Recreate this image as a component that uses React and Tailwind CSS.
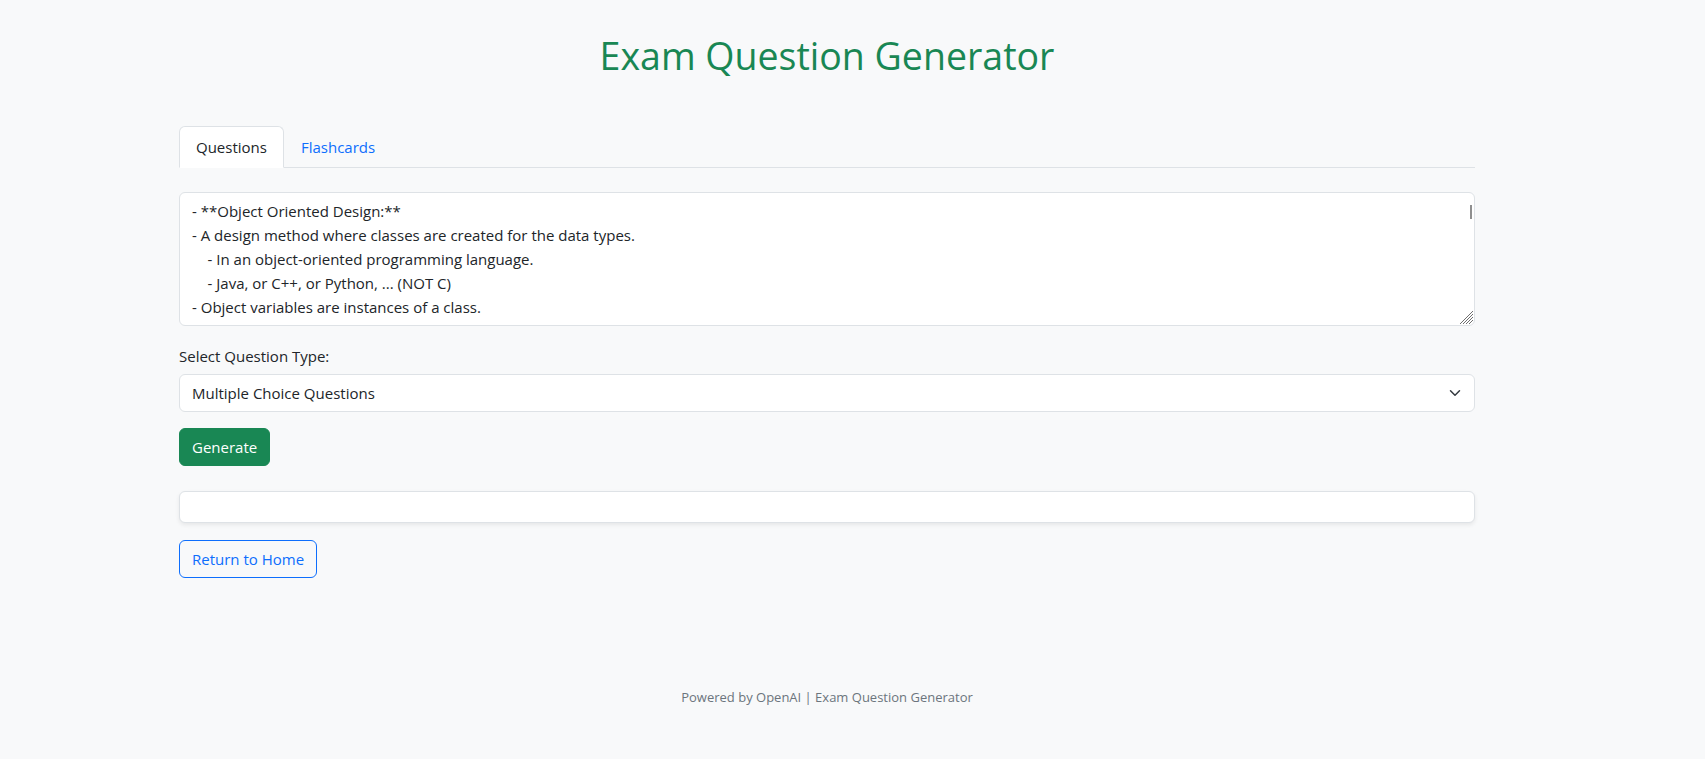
import { useState } from 'react';

const NOTES = [
  '- **Object Oriented Design:**',
  '- A design method where classes are created for the data types.',
  '    - In an object-oriented programming language.',
  '    - Java, or C++, or Python, ... (NOT C)',
  '- Object variables are instances of a class.',
].join('\n');

export default function App() {
  const [tab, setTab] = useState('questions');
  const [type, setType] = useState('mcq');

  return (
    <div className="min-h-screen bg-[#f8f9fa] font-['Open_Sans','Noto_Sans',sans-serif] text-[15px] text-[#212529]">
      <div className="w-[1654px]">
        <div className="mx-auto w-[1296px] pt-8">
          <h1 className="mb-[46px] text-center text-[37.5px] leading-[48px] text-[#198754]">
            Exam Question Generator
          </h1>

          <ul className="flex border-b border-[#dee2e6]">
            <li className="-mb-px">
              <button
                type="button"
                onClick={() => setTab('questions')}
                className={
                  tab === 'questions'
                    ? 'rounded-t-md border border-[#dee2e6] border-b-white bg-white px-4 py-2 leading-6 text-[#212529]'
                    : 'rounded-t-md border border-transparent px-4 py-2 leading-6 text-[#0d6efd]'
                }
              >
                Questions
              </button>
            </li>
            <li className="-mb-px">
              <button
                type="button"
                onClick={() => setTab('flashcards')}
                className={
                  tab === 'flashcards'
                    ? 'rounded-t-md border border-[#dee2e6] border-b-white bg-white px-4 py-2 leading-6 text-[#212529]'
                    : 'rounded-t-md border border-transparent px-4 py-2 leading-6 text-[#0d6efd]'
                }
              >
                Flashcards
              </button>
            </li>
          </ul>

          <div className="relative mt-6">
            <textarea
              defaultValue={NOTES}
              rows={5}
              className="block h-[134px] w-full resize-none overflow-hidden whitespace-pre rounded-md border border-[#dee2e6] bg-white px-3 py-1.5 leading-6 outline-none"
            />
            {/* fake scrollbar thumb + resize grip */}
            <span className="pointer-events-none absolute right-[3px] top-[13px] h-[14px] w-[2px] bg-[#8f8f8f]" />
            <svg
              className="pointer-events-none absolute bottom-[2px] right-[2px] h-[14px] w-[14px]"
              viewBox="0 0 14 14"
              stroke="#6f6f6f"
              strokeWidth="1"
            >
              <line x1="1" y1="14" x2="14" y2="1" />
              <line x1="4" y1="14" x2="14" y2="4" />
              <line x1="7" y1="14" x2="14" y2="7" />
              <line x1="10" y1="14" x2="14" y2="10" />
            </svg>
          </div>

          <label className="mt-[18px] mb-1.5 block leading-6">Select Question Type:</label>
          <div className="relative">
            <select
              value={type}
              onChange={(e) => setType(e.target.value)}
              className="block h-[38px] w-full appearance-none rounded-md border border-[#dee2e6] bg-white px-3 leading-6 outline-none"
            >
              <option value="mcq">Multiple Choice Questions</option>
              <option value="short">Short Answer Questions</option>
              <option value="tf">True / False Questions</option>
            </select>
            <svg
              className="pointer-events-none absolute right-3 top-[13px] h-3 w-4"
              viewBox="0 0 16 16"
              fill="none"
              stroke="#343a40"
              strokeWidth="2"
              strokeLinecap="round"
              strokeLinejoin="round"
            >
              <path d="m2 5 6 6 6-6" />
            </svg>
          </div>

          <button
            type="button"
            className="mt-4 block rounded-md border border-[#198754] bg-[#198754] px-3 py-1.5 leading-6 text-white"
          >
            Generate
          </button>

          <div className="mt-[25px] h-[32px] rounded-md border border-[#dee2e6] bg-white shadow-[0_2px_4px_rgba(0,0,0,0.075)]" />

          <button
            type="button"
            className="mt-[17px] block rounded-md border border-[#0d6efd] px-3 py-1.5 leading-6 text-[#0d6efd]"
          >
            Return to Home
          </button>

          <footer className="mt-[109px] pb-8 text-center text-[13px] leading-5 text-[#6c757d]">
            Powered by OpenAI | Exam Question Generator
          </footer>
        </div>
      </div>
    </div>
  );
}
